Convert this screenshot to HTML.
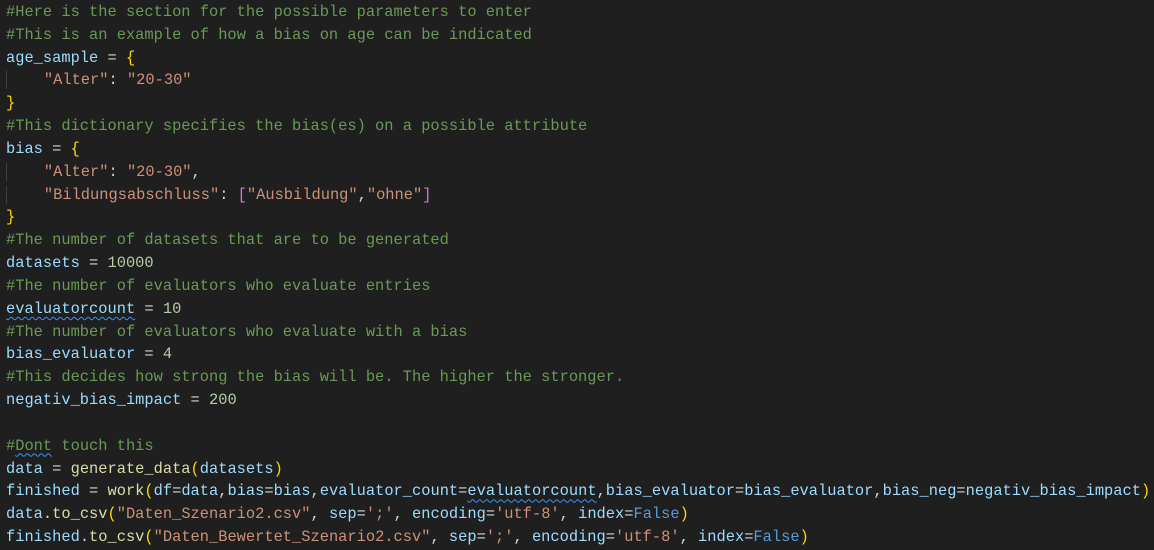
<!DOCTYPE html>
<html><head><meta charset="utf-8"><style>
html,body{margin:0;background:#1f1f1f;width:1154px;height:550px;overflow:hidden}
pre{margin:0;padding:1px 0 0 6px;font-family:"Liberation Mono",monospace;font-size:15.38px;line-height:22.83px;color:#d4d4d4;white-space:pre}
.c{color:#6a9955}.v{color:#9cdcfe}.s{color:#ce9178}.n{color:#b5cea8}.b{color:#ffd700}.p{color:#da70d6}.f{color:#dcdcaa}.k{color:#569cd6}
.w{text-decoration:underline wavy #3794ff;text-underline-offset:3px;text-decoration-thickness:1px}
.g{border-left:1px solid #404040}
</style></head><body><pre><span class="c">#Here is the section for the possible parameters to enter</span>
<span class="c">#This is an example of how a bias on age can be indicated</span>
<span class="v">age_sample</span> = <span class="b">{</span>
<span class="g"></span>    <span class="s">"Alter"</span>: <span class="s">"20-30"</span>
<span class="b">}</span>
<span class="c">#This dictionary specifies the bias(es) on a possible attribute</span>
<span class="v">bias</span> = <span class="b">{</span>
<span class="g"></span>    <span class="s">"Alter"</span>: <span class="s">"20-30"</span>,
<span class="g"></span>    <span class="s">"Bildungsabschluss"</span>: <span class="p">[</span><span class="s">"Ausbildung"</span>,<span class="s">"ohne"</span><span class="p">]</span>
<span class="b">}</span>
<span class="c">#The number of datasets that are to be generated</span>
<span class="v">datasets</span> = <span class="n">10000</span>
<span class="c">#The number of evaluators who evaluate entries</span>
<span class="v w">evaluatorcount</span> = <span class="n">10</span>
<span class="c">#The number of evaluators who evaluate with a bias</span>
<span class="v">bias_evaluator</span> = <span class="n">4</span>
<span class="c">#This decides how strong the bias will be. The higher the stronger.</span>
<span class="v">negativ_bias_impact</span> = <span class="n">200</span>

<span class="c">#<span class="w">Dont</span> touch this</span>
<span class="v">data</span> = <span class="f">generate_data</span><span class="b">(</span><span class="v">datasets</span><span class="b">)</span>
<span class="v">finished</span> = <span class="f">work</span><span class="b">(</span><span class="v">df</span>=<span class="v">data</span>,<span class="v">bias</span>=<span class="v">bias</span>,<span class="v">evaluator_count</span>=<span class="v w">evaluatorcount</span>,<span class="v">bias_evaluator</span>=<span class="v">bias_evaluator</span>,<span class="v">bias_neg</span>=<span class="v">negativ_bias_impact</span><span class="b">)</span>
<span class="v">data</span>.<span class="f">to_csv</span><span class="b">(</span><span class="s">"Daten_Szenario2.csv"</span>, <span class="v">sep</span>=<span class="s">';'</span>, <span class="v">encoding</span>=<span class="s">'utf-8'</span>, <span class="v">index</span>=<span class="k">False</span><span class="b">)</span>
<span class="v">finished</span>.<span class="f">to_csv</span><span class="b">(</span><span class="s">"Daten_Bewertet_Szenario2.csv"</span>, <span class="v">sep</span>=<span class="s">';'</span>, <span class="v">encoding</span>=<span class="s">'utf-8'</span>, <span class="v">index</span>=<span class="k">False</span><span class="b">)</span></pre></body></html>
